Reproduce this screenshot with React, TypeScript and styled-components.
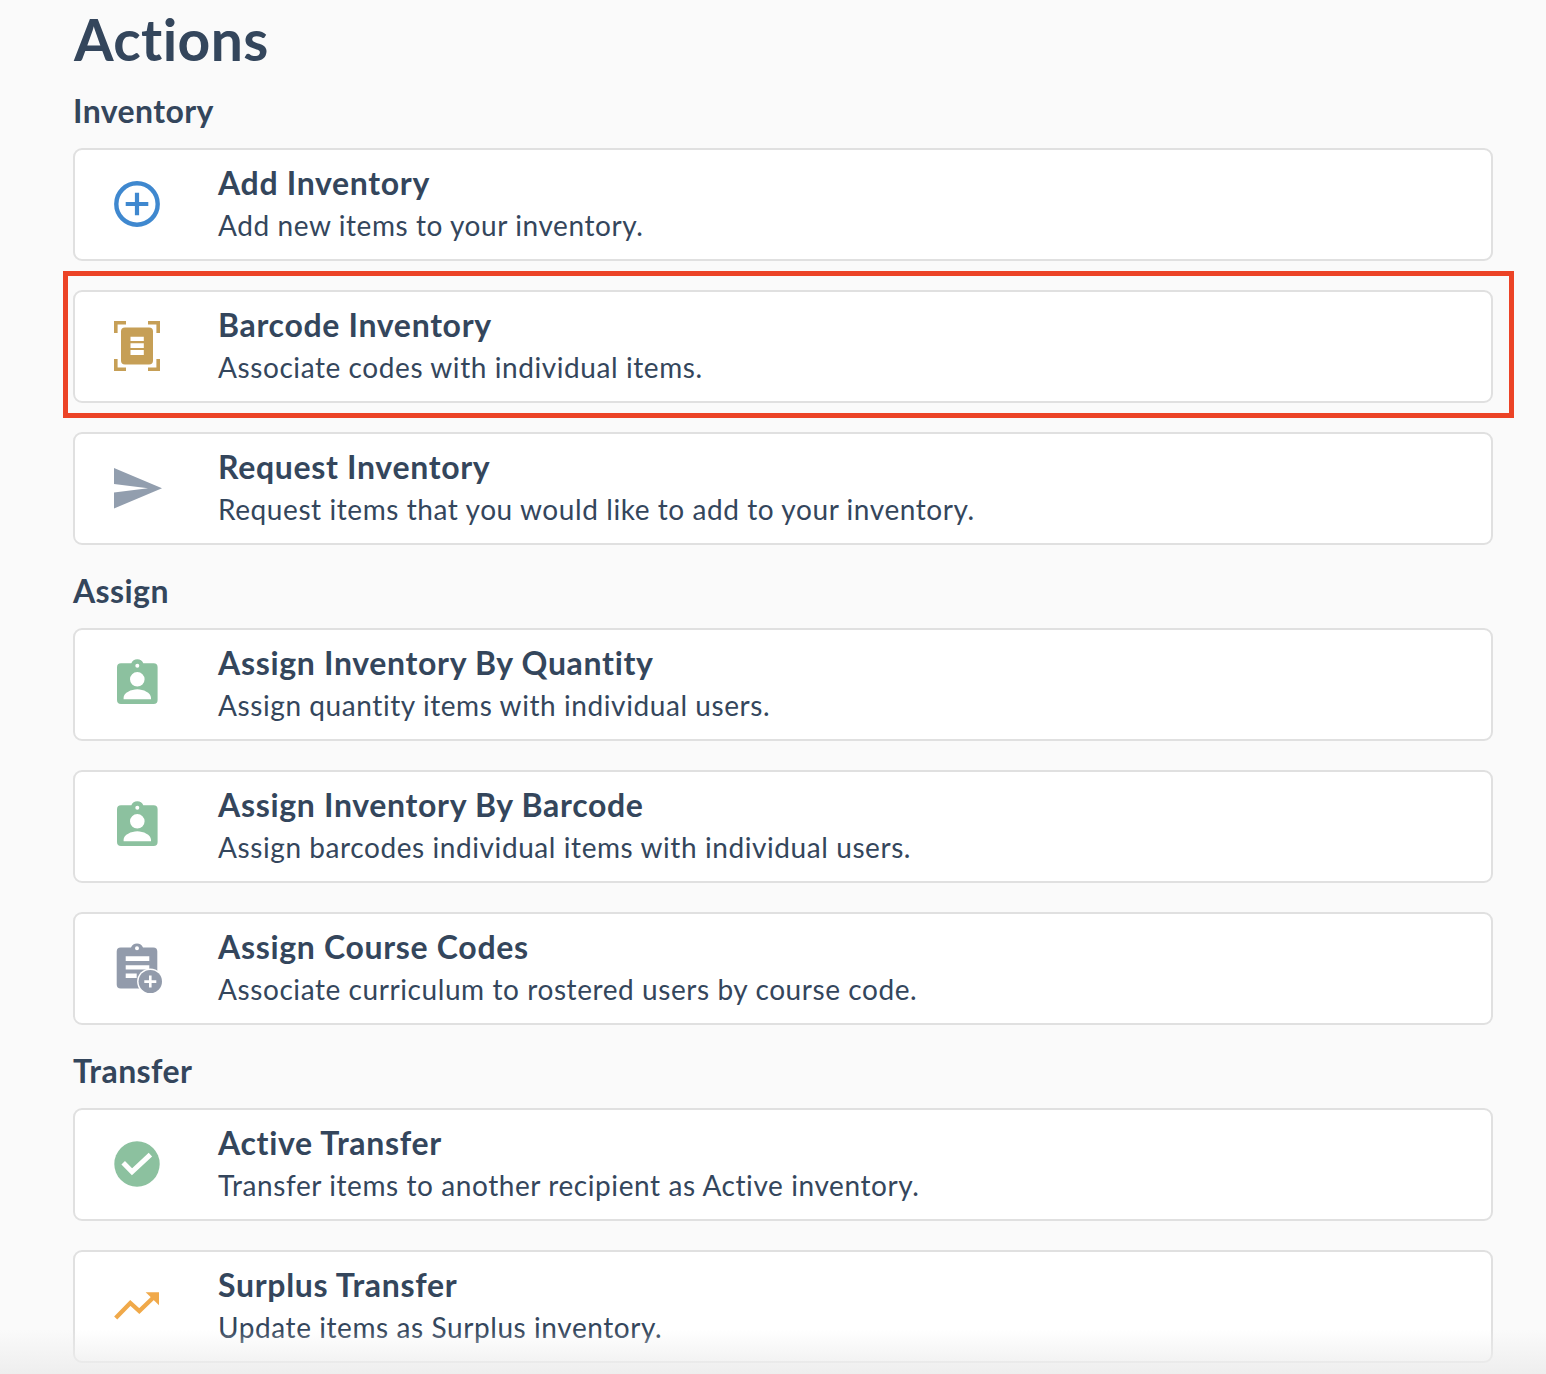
import React from "react";
import styled, { createGlobalStyle } from "styled-components";

const Global = createGlobalStyle`
  html, body { margin: 0; padding: 0; background: #fafafa; }
  body { font-family: Lato, "Noto Sans", sans-serif; color: #34465c; }
`;

const Page = styled.main`
  position: relative;
  box-sizing: border-box;
  height: 1374px;
  padding: 0 53px 0 73px;
  overflow: hidden;
`;

const Title = styled.h1`
  margin: 0;
  padding: 6px 0 0 1px;
  height: 69px;
  font-size: 57px;
  line-height: 66px;
  font-weight: 700;
  letter-spacing: 0.4px;
`;

const SectionTitle = styled.h2`
  margin: 0;
  padding: 18px 0 0 0;
  height: 55px;
  font-size: 32px;
  line-height: 36px;
  font-weight: 700;
  letter-spacing: 0.4px;
`;

const Section = styled.section`
  display: flex;
  flex-direction: column;
  gap: 29px;
  margin-bottom: 10px;
`;

const Card = styled.article`
  position: relative;
  box-sizing: border-box;
  height: 113px;
  display: flex;
  align-items: center;
  background: #fff;
  border: 2px solid #e0e0e0;
  border-radius: 9px;
`;

const IconSlot = styled.div`
  flex: none;
  width: 124px;
  display: flex;
  justify-content: center;
  svg { display: block; margin-top: -1px; }
`;

const Body = styled.div`
  display: flex;
  flex-direction: column;
  gap: 6px;
  margin: -4px 0 0 19px;
`;

const ItemTitle = styled.h3`
  margin: 0;
  font-size: 32px;
  line-height: 38px;
  font-weight: 700;
  letter-spacing: 0.68px;
`;

const ItemText = styled.p`
  margin: 0;
  font-size: 28px;
  line-height: 34px;
  font-weight: 400;
  letter-spacing: 0.58px;
`;

const Highlight = styled.div`
  position: absolute;
  left: -12px;
  right: -23px;
  top: -21px;
  bottom: -17px;
  border: 5px solid #ec4326;
  pointer-events: none;
`;

const BottomFade = styled.div`
  position: absolute;
  left: 0;
  right: 0;
  bottom: 0;
  height: 44px;
  background: linear-gradient(to bottom, rgba(238, 238, 238, 0), rgba(238, 238, 238, 1));
  pointer-events: none;
`;

const Plus = () => (
  <svg width="46" height="46" viewBox="0 0 46 46">
    <circle cx="23" cy="23" r="20.7" fill="none" stroke="#3f88cf" strokeWidth="4.4" />
    <path d="M23 11.700v22.600M11.700 23h22.600" stroke="#3f88cf" strokeWidth="4.2" fill="none" />
  </svg>
);

const Barcode = () => (
  <svg width="46" height="50" viewBox="0 0 46 50">
    <path
      d="M1.800 12V1.800H12M34 1.800h10.200V12M1.800 38v10.200H12M34 48.200h10.200V38"
      fill="none"
      stroke="#c69f56"
      strokeWidth="3.600"
    />
    <rect x="7" y="6.500" width="32" height="37" rx="4" fill="#c69f56" />
    <path d="M16.500 15.700h13.300v4.300H16.500zM16.500 22.300h13.300v4.700H16.500zM16.500 29h13.300v5H16.500z" fill="#fff" />
  </svg>
);

const Send = () => (
  <svg width="50" height="41" viewBox="-2 0 50 41">
    <path d="M0 0 48 20.300 0 40.500V24.500L34 20.300 0 16z" fill="#929eae" />
  </svg>
);

const Badge = () => (
  <svg width="41" height="50" viewBox="0 0 41 50">
    <path
      fillRule="evenodd"
      fill="#8cc19f"
      d="M4 4.300h10.300a6.500 6.500 0 0 1 12 0H36.600a4 4 0 0 1 4 4V41a4 4 0 0 1-4 4H4a4 4 0 0 1-4-4V8.300a4 4 0 0 1 4-4zM20.300 4.700a2 2 0 1 0 0 4 2 2 0 0 0 0-4zM20.300 13a7.300 7.300 0 1 0 0 14.600 7.300 7.300 0 0 0 0-14.600zM6.600 40.300H34v-1.500c0-5-7.800-8.500-13.700-8.500S6.600 33.800 6.600 38.800z"
    />
  </svg>
);

const ClipboardPlus = () => (
  <svg width="50" height="50" viewBox="-4.700 0 50 50">
    <path
      fill="#929bab"
      fillRule="evenodd"
      d="M4 4.600h10.300a6.500 6.500 0 0 1 12 0H36.600a4 4 0 0 1 4 4V45.600H4a4 4 0 0 1-4-4V8.600a4 4 0 0 1 4-4zM20.300 3.300a2 2 0 1 0 0 4 2 2 0 0 0 0-4zM9 13.300V18H32.600V13.300zM9 22.300V26.600H32.600V22.300zM9 30.600V35H20V30.600z"
    />
    <circle cx="33.600" cy="38.600" r="13.200" fill="#fff" />
    <circle cx="33.600" cy="38.600" r="11.700" fill="#929bab" />
    <path d="M33.600 32.600v12M27.600 38.600h12" stroke="#fff" strokeWidth="2.600" />
  </svg>
);

const Check = () => (
  <svg width="46" height="46" viewBox="0 0 46 46">
    <circle cx="23" cy="23" r="22.700" fill="#8cc19f" />
    <path d="M9.200 21.800 18 30.800 36.400 13.600" fill="none" stroke="#fff" strokeWidth="5" />
  </svg>
);

const Trend = () => (
  <svg width="46" height="28" viewBox="0 0 46 28">
    <path d="M1.700 26 16.300 11 25.300 19 42 3" fill="none" stroke="#f0a94a" strokeWidth="4.300" />
    <path d="M31.700 .3H45V13.300z" fill="#f0a94a" />
  </svg>
);

type Item = { icon: React.ReactNode; title: string; text: string; highlighted?: boolean };
type Group = { name: string; items: Item[] };

const groups: Group[] = [
  {
    name: "Inventory",
    items: [
      { icon: <Plus />, title: "Add Inventory", text: "Add new items to your inventory." },
      {
        icon: <Barcode />,
        title: "Barcode Inventory",
        text: "Associate codes with individual items.",
        highlighted: true,
      },
      {
        icon: <Send />,
        title: "Request Inventory",
        text: "Request items that you would like to add to your inventory.",
      },
    ],
  },
  {
    name: "Assign",
    items: [
      {
        icon: <Badge />,
        title: "Assign Inventory By Quantity",
        text: "Assign quantity items with individual users.",
      },
      {
        icon: <Badge />,
        title: "Assign Inventory By Barcode",
        text: "Assign barcodes individual items with individual users.",
      },
      {
        icon: <ClipboardPlus />,
        title: "Assign Course Codes",
        text: "Associate curriculum to rostered users by course code.",
      },
    ],
  },
  {
    name: "Transfer",
    items: [
      {
        icon: <Check />,
        title: "Active Transfer",
        text: "Transfer items to another recipient as Active inventory.",
      },
      { icon: <Trend />, title: "Surplus Transfer", text: "Update items as Surplus inventory." },
    ],
  },
];

export default function App() {
  return (
    <Page>
      <Global />
      <Title>Actions</Title>
      {groups.map((g) => (
        <div key={g.name}>
          <SectionTitle>{g.name}</SectionTitle>
          <Section>
            {g.items.map((item) => (
              <Card key={item.title}>
                <IconSlot>{item.icon}</IconSlot>
                <Body>
                  <ItemTitle>{item.title}</ItemTitle>
                  <ItemText>{item.text}</ItemText>
                </Body>
                {item.highlighted && <Highlight />}
              </Card>
            ))}
          </Section>
        </div>
      ))}
      <BottomFade />
    </Page>
  );
}
